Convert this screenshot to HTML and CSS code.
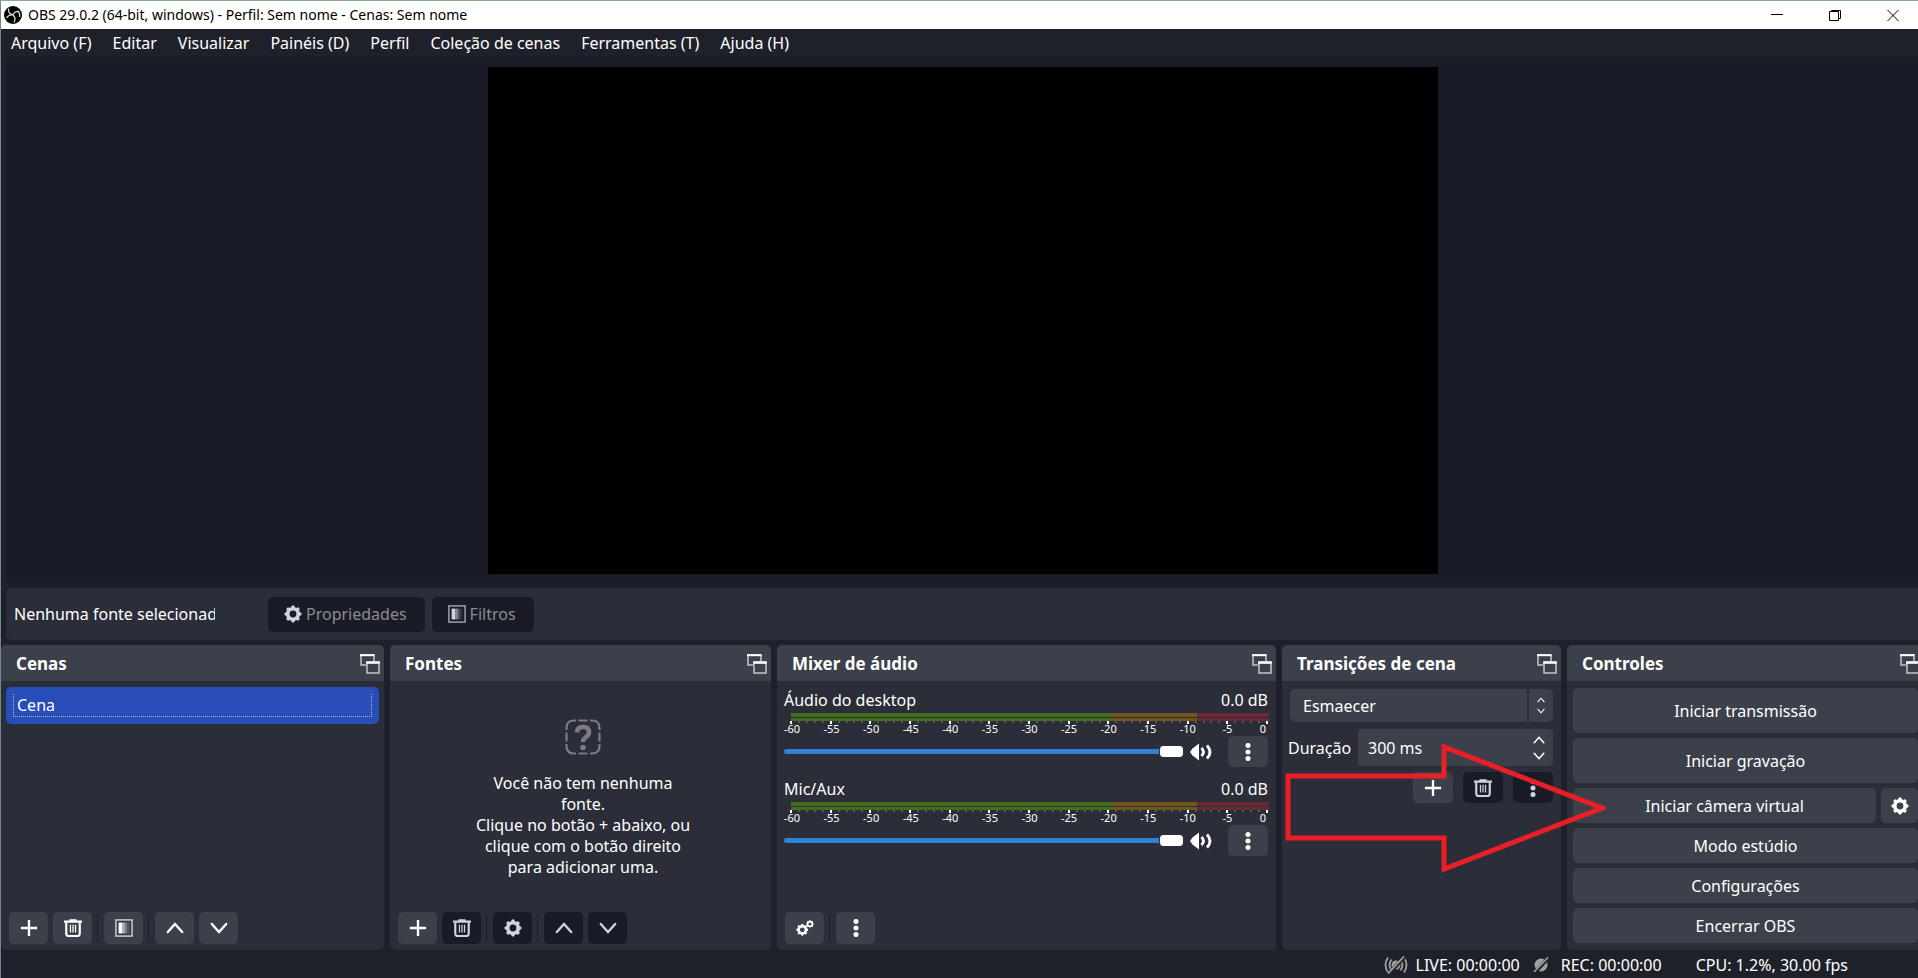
FILE: index.html
```html
<!DOCTYPE html>
<html lang="pt-BR">
<head>
    <meta charset="UTF-8">
    <meta name="viewport" content="width=device-width, initial-scale=1.0">
    <title>OBS 29.0.2</title>
    <link rel="stylesheet" href="styles.css">
</head>
<body>
    <!-- Shared icons -->
    <svg class="sprite" aria-hidden="true">
        <symbol id="plus" viewBox="0 0 20 20">
            <path d="M10 1v18M1 10h18" fill="none" stroke="currentColor" stroke-width="2.600"/>
        </symbol>
        <symbol id="trash" viewBox="0 0 20 20">
            <path d="M0 3h20M6 1.500h8" fill="none" stroke="currentColor" stroke-width="2.600"/>
            <path d="M2.500 4v12q0 3 3 3h9q3 0 3-3V4" fill="none" stroke="currentColor" stroke-width="2.400"/>
            <path d="M7.200 6.500v8.500M10 6.500v8.500M12.800 6.500v8.500" fill="none" stroke="currentColor" stroke-width="1.400"/>
        </symbol>
        <symbol id="gear" viewBox="0 0 20 20">
            <circle cx="10" cy="10" r="5.800" fill="none" stroke="currentColor" stroke-width="4"/>
            <path d="M10 3v-.6M10 17v.6M3 10h-.6M17 10h.6M14.950 5.050l.4-.4M5.050 14.950l-.4.4M5.050 5.050l-.4-.4M14.950 14.950l.4.4" fill="none" stroke="currentColor" stroke-width="4" stroke-linecap="round"/>
        </symbol>
        <symbol id="filter" viewBox="0 0 20 20">
            <rect x="1" y="1" width="18" height="18" fill="none" stroke="currentColor" stroke-opacity=".75" stroke-width="1.600"/>
            <path d="M4 4h4v12H4z" fill="currentColor"/>
            <path d="M8 4h3v12H8z" fill="currentColor" opacity=".6"/>
            <path d="M11 4h2.500v12H11z" fill="currentColor" opacity=".3"/>
            <path d="M13.500 4H16v12h-2.500z" fill="currentColor" opacity=".12"/>
        </symbol>
        <symbol id="up" viewBox="0 0 20 20">
            <path d="M2 14.500L10 5.500l8 9" fill="none" stroke="currentColor" stroke-width="2.600" stroke-linecap="round"/>
        </symbol>
        <symbol id="down" viewBox="0 0 20 20">
            <path d="M2 5.500l8 9 8-9" fill="none" stroke="currentColor" stroke-width="2.600" stroke-linecap="round"/>
        </symbol>
        <symbol id="dots" viewBox="0 0 20 20">
            <circle cx="10" cy="2.800" r="2.800" fill="currentColor"/>
            <circle cx="10" cy="10" r="2.800" fill="currentColor"/>
            <circle cx="10" cy="17.200" r="2.800" fill="currentColor"/>
        </symbol>
        <symbol id="float" viewBox="0 0 20 20">
            <path d="M6 11H1V1h13v6" fill="none" stroke="currentColor" stroke-opacity=".7" stroke-width="1.500"/>
            <path d="M0 1.200h14.500" stroke="currentColor" stroke-width="2"/>
            <path d="M7 8v11h12V8" fill="none" stroke="currentColor" stroke-opacity=".7" stroke-width="1.500"/>
            <path d="M6.200 8.500h13.600" stroke="currentColor" stroke-width="2.600"/>
        </symbol>
        <symbol id="speaker" viewBox="0 0 24 20">
            <path d="M1 10L3.500 6.500L10 1.500v17L3.500 13.500z" fill="currentColor"/>
            <path d="M12.500 6q4 4 0 8M18 3.500q6 6.500 0 13" fill="none" stroke="currentColor" stroke-width="2.800"/>
        </symbol>
    </svg>

    <div class="window">
        <header class="titlebar">
            <svg class="logo" viewBox="0 0 20 20">
                <circle cx="10" cy="10" r="9" fill="#000"/>
                <path d="M5.500 3.500q-.5 5.500 4.500 6.500 1.500-4 6-3.500M10 10q3.500 3 1 7.500M10 10Q6 9 3.500 13M15.500 6.500q2 2.500 1 5.500" fill="none" stroke="#d8d8d8" stroke-width="1.300"/>
            </svg>
            <span class="title">OBS 29.0.2 (64-bit, windows) - Perfil: Sem nome - Cenas: Sem nome</span>
            <div class="window-buttons">
                <button aria-label="Minimizar"><svg viewBox="0 0 13 13"><path d="M0 5.500h12"/></svg></button>
                <button aria-label="Restaurar"><svg viewBox="0 0 13 13"><path d="M.5 2.500h9v9h-9zM2.500 2.500v-1h9v8h-2"/></svg></button>
                <button aria-label="Fechar"><svg viewBox="0 0 13 13"><path d="M.5 1l11 11M11.500 1l-11 11"/></svg></button>
            </div>
        </header>

        <nav class="menu">
            <button>Arquivo (F)</button>
            <button>Editar</button>
            <button>Visualizar</button>
            <button>Painéis (D)</button>
            <button>Perfil</button>
            <button>Coleção de cenas</button>
            <button>Ferramentas (T)</button>
            <button>Ajuda (H)</button>
        </nav>

        <main class="preview">
            <div class="canvas"></div>
        </main>

        <section class="context-bar">
            <span class="source-name">Nenhuma fonte selecionada</span>
            <button class="btn off" disabled><svg class="icon"><use href="#gear"/></svg>Propriedades</button>
            <button class="btn off" disabled><svg class="icon"><use href="#filter"/></svg>Filtros</button>
        </section>

        <div class="docks">
            <section class="dock">
                <header class="dock-title"><h2>Cenas</h2><button aria-label="Destacar"><svg class="icon"><use href="#float"/></svg></button></header>
                <ul class="scenes">
                    <li><span>Cena</span></li>
                </ul>
                <div class="toolbar">
                    <button class="btn" aria-label="Adicionar"><svg class="icon"><use href="#plus"/></svg></button>
                    <button class="btn" aria-label="Remover"><svg class="icon"><use href="#trash"/></svg></button>
                    <i class="sep"></i>
                    <button class="btn" aria-label="Filtros"><svg class="icon"><use href="#filter"/></svg></button>
                    <i class="sep"></i>
                    <button class="btn" aria-label="Subir"><svg class="icon"><use href="#up"/></svg></button>
                    <button class="btn" aria-label="Descer"><svg class="icon"><use href="#down"/></svg></button>
                </div>
            </section>

            <section class="dock">
                <header class="dock-title"><h2>Fontes</h2><button aria-label="Destacar"><svg class="icon"><use href="#float"/></svg></button></header>
                <div class="empty">
                    <svg viewBox="0 0 36 36">
                        <path d="M1.500 11V9q0-7.500 7.500-7.500h2M13.500 1.500h9M25 1.500h2q7.500 0 7.500 7.500v2M34.500 13.500v9M34.500 25v2q0 7.500-7.500 7.500h-2M22.500 34.500h-9M11 34.500H9q-7.500 0-7.500-7.500v-2M1.500 22.500v-9"/>
                        <path class="mark" d="M12 13.500Q12 8 18 8t6 5q0 3-3 5t-3 5"/>
                        <circle cx="18" cy="28.500" r="2.800"/>
                    </svg>
                    <p>Você não tem nenhuma<br>fonte.<br>Clique no botão + abaixo, ou<br>clique com o botão direito<br>para adicionar uma.</p>
                </div>
                <div class="toolbar">
                    <button class="btn" aria-label="Adicionar"><svg class="icon"><use href="#plus"/></svg></button>
                    <button class="btn off" aria-label="Remover" disabled><svg class="icon"><use href="#trash"/></svg></button>
                    <i class="sep"></i>
                    <button class="btn off" aria-label="Propriedades" disabled><svg class="icon"><use href="#gear"/></svg></button>
                    <i class="sep"></i>
                    <button class="btn off" aria-label="Subir" disabled><svg class="icon"><use href="#up"/></svg></button>
                    <button class="btn off" aria-label="Descer" disabled><svg class="icon"><use href="#down"/></svg></button>
                </div>
            </section>

            <section class="dock">
                <header class="dock-title"><h2>Mixer de áudio</h2><button aria-label="Destacar"><svg class="icon"><use href="#float"/></svg></button></header>
                <div class="mixer">
                    <div class="channel">
                        <div class="channel-head"><label for="desktop">Áudio do desktop</label><span>0.0 dB</span></div>
                        <div class="meter"></div>
                        <div class="ticks"></div>
                        <div class="scale"><span>-60</span><span>-55</span><span>-50</span><span>-45</span><span>-40</span><span>-35</span><span>-30</span><span>-25</span><span>-20</span><span>-15</span><span>-10</span><span>-5</span><span>0</span></div>
                        <div class="volume">
                            <input type="range" id="desktop" min="0" max="100" value="100">
                            <button class="mute" aria-label="Mudo"><svg><use href="#speaker"/></svg></button>
                            <button class="btn wide" aria-label="Opções"><svg class="icon"><use href="#dots"/></svg></button>
                        </div>
                    </div>
                    <div class="channel">
                        <div class="channel-head"><label for="mic">Mic/Aux</label><span>0.0 dB</span></div>
                        <div class="meter"></div>
                        <div class="ticks"></div>
                        <div class="scale"><span>-60</span><span>-55</span><span>-50</span><span>-45</span><span>-40</span><span>-35</span><span>-30</span><span>-25</span><span>-20</span><span>-15</span><span>-10</span><span>-5</span><span>0</span></div>
                        <div class="volume">
                            <input type="range" id="mic" min="0" max="100" value="100">
                            <button class="mute" aria-label="Mudo"><svg><use href="#speaker"/></svg></button>
                            <button class="btn wide" aria-label="Opções"><svg class="icon"><use href="#dots"/></svg></button>
                        </div>
                    </div>
                </div>
                <div class="toolbar">
                    <button class="btn" aria-label="Propriedades avançadas">
                        <svg class="icon" viewBox="0 0 20 20"><use href="#gear" x="0" y="5" width="14" height="14"/><use href="#gear" x="11" y="1" width="9" height="9"/></svg>
                    </button>
                    <i class="sep"></i>
                    <button class="btn" aria-label="Menu do mixer"><svg class="icon"><use href="#dots"/></svg></button>
                </div>
            </section>

            <section class="dock">
                <header class="dock-title"><h2>Transições de cena</h2><button aria-label="Destacar"><svg class="icon"><use href="#float"/></svg></button></header>
                <div class="transitions">
                    <div class="combo">
                        <select aria-label="Transição"><option>Esmaecer</option></select>
                        <span class="combo-arrows"><svg><use href="#up"/></svg><svg><use href="#down"/></svg></span>
                    </div>
                    <div class="duration">
                        <label for="duration">Duração</label>
                        <div class="spin">
                            <input type="text" id="duration" value="300 ms">
                            <div class="spin-buttons">
                                <button aria-label="Aumentar"><svg><use href="#up"/></svg></button>
                                <button aria-label="Diminuir"><svg><use href="#down"/></svg></button>
                            </div>
                        </div>
                    </div>
                    <div class="transition-buttons">
                        <button class="btn wide" aria-label="Adicionar"><svg class="icon"><use href="#plus"/></svg></button>
                        <button class="btn wide off" aria-label="Remover" disabled><svg class="icon"><use href="#trash"/></svg></button>
                        <button class="btn wide off" aria-label="Opções" disabled><svg class="icon"><use href="#dots"/></svg></button>
                    </div>
                </div>
                <!-- Red arrow drawn over the docks -->
                <svg class="arrow" viewBox="0 0 324 130"><path d="M6 33H162V4L320 65 162 126V95H6z"/></svg>
            </section>

            <section class="dock">
                <header class="dock-title"><h2>Controles</h2><button aria-label="Destacar"><svg class="icon"><use href="#float"/></svg></button></header>
                <div class="controls">
                    <button class="btn tall">Iniciar transmissão</button>
                    <button class="btn tall">Iniciar gravação</button>
                    <div class="row">
                        <button class="btn">Iniciar câmera virtual</button>
                        <button class="btn config" aria-label="Configurar câmera"><svg class="icon"><use href="#gear"/></svg></button>
                    </div>
                    <button class="btn">Modo estúdio</button>
                    <button class="btn">Configurações</button>
                    <button class="btn">Encerrar OBS</button>
                </div>
            </section>
        </div>

        <footer class="status">
            <span class="live">
                <svg viewBox="0 0 24 18"><circle cx="12" cy="9" r="4.500" fill="currentColor"/><path d="M4 1.500q-5 7.500 0 15M7.500 3.500q-4 5.500 0 11M20 1.500q5 7.500 0 15M16.500 3.500q4 5.500 0 11" fill="none" stroke="currentColor" stroke-width="1.800"/><path d="M4.500 18L20.500 1" stroke="#1f212a" stroke-width="4"/><path d="M4 17.500L20 .5" stroke="currentColor" stroke-width="1.800"/></svg>
                LIVE: 00:00:00
            </span>
            <span class="rec">
                <svg viewBox="0 0 16 18"><circle cx="8" cy="9" r="6.500" fill="currentColor"/><path d="M1.500 17L15.500 2" stroke="#1f212a" stroke-width="3.500"/><path d="M1 16L15 1.500" stroke="currentColor" stroke-width="1.600"/></svg>
                REC: 00:00:00
            </span>
            <span class="cpu">CPU: 1.2%, 30.00 fps</span>
        </footer>
    </div>
</body>
</html>
```
FILE: styles.css
```css
* {
    box-sizing: border-box;
}

body {
    margin: 0;
    background-color: #1f212a;
    color: #fff;
    font-family: "Noto Sans", "Open Sans", sans-serif;
    font-size: 16px;
    line-height: 20px;
}

button,
input,
select {
    font: inherit;
    color: inherit;
    border: none;
    background: none;
    padding: 0;
    margin: 0;
}

svg {
    display: block;
    flex: none;
}

.sprite {
    position: absolute;
    width: 0;
    height: 0;
}

.icon {
    width: 18px;
    height: 18px;
}

.window {
    display: flex;
    flex-direction: column;
    min-height: 100vh;
    overflow: hidden;
    border-top: 1px solid #86ad87;
    border-left: 1px solid #6c8a90;
}

/* Title bar */
.titlebar {
    display: flex;
    align-items: center;
    height: 28px;
    padding-left: 2px;
    background-color: #fff;
    color: #000;
    font-size: 14px;
}

.logo {
    width: 20px;
    height: 20px;
}

.title {
    margin-left: 5px;
}

.window-buttons {
    display: flex;
    margin-left: auto;
    margin-right: -4px;
}

.window-buttons button {
    display: flex;
    align-items: center;
    justify-content: center;
    width: 58px;
    height: 28px;
}

.window-buttons svg {
    width: 13px;
    height: 13px;
    fill: none;
    stroke: #000;
}

/* Menu */
.menu {
    display: flex;
    gap: 21px;
    height: 28px;
    padding-left: 10px;
}

/* Preview */
.preview {
    flex: 1;
    display: flex;
    justify-content: center;
    align-items: flex-start;
    margin: 0 -2px 0 5px;
    padding: 10px 0 9px;
    background-color: #191b26;
}

.canvas {
    width: 49.6%;
    aspect-ratio: 950 / 507;
    background-color: #000;
}

/* Source bar */
.context-bar {
    display: flex;
    align-items: center;
    gap: 7px;
    height: 52px;
    margin: 5px -6px 5px 5px;
    padding-left: 8px;
    border-radius: 5px;
    background-color: #2b2d38;
}

.source-name {
    width: 201px;
    margin-right: 46px;
    overflow: hidden;
    white-space: nowrap;
}

.context-bar .btn {
    gap: 4px;
    height: 35px;
    padding: 0 18px 0 16px;
}

.btn {
    display: flex;
    align-items: center;
    justify-content: center;
    border-radius: 5px;
    background-color: #3c404b;
}

.btn.off {
    background-color: #191b26;
    color: #8c8c8f;
}

.btn.off .icon {
    color: #d2d3e0;
}

/* Docks */
.docks {
    display: grid;
    grid-template-columns: 383fr 381fr 499fr 279fr 357fr;
    gap: 6px;
    margin-right: -6px;
}

.dock {
    position: relative;
    display: flex;
    flex-direction: column;
    border-radius: 5px;
    background-color: #2b2d38;
}

.dock-title {
    display: flex;
    align-items: center;
    justify-content: space-between;
    height: 36px;
    padding: 1px 4px 0 15px;
    border-radius: 5px 5px 0 0;
    background-color: #3c404b;
}

.dock-title .icon {
    width: 20px;
    height: 20px;
}

h2 {
    margin: 0;
    font-size: 17px;
    font-weight: bold;
}

.scenes {
    flex: 1;
    margin: 0;
    padding: 6px 5px;
    list-style: none;
}

.scenes li {
    padding: 7px;
    border-radius: 5px;
    background-color: #284cb8;
}

.scenes span {
    display: block;
    padding: 1px 3px;
    border: 1px dotted #b9bfb0;
    border-top: none;
}

.toolbar {
    display: flex;
    gap: 5px;
    margin-top: auto;
    padding: 0 8px 6px;
}

.toolbar .btn {
    width: 39px;
    height: 32px;
}

.sep {
    width: 1px;
    margin: 3px 1px 3px 0;
    background-color: #191b26;
}

/* Sources */
.empty {
    display: flex;
    flex-direction: column;
    align-items: center;
    padding: 38px 0 0 5px;
}

.empty svg {
    width: 36px;
    height: 36px;
    fill: none;
    stroke: #7b7c83;
    stroke-width: 2.2;
}

.empty .mark {
    stroke-width: 4.5;
}

.empty circle {
    fill: #7b7c83;
    stroke: none;
}

.empty p {
    margin: 18px 0 0;
    line-height: 21px;
    text-align: center;
}

/* Mixer */
.mixer {
    padding: 9px 8px 0 7px;
}

.channel {
    margin-bottom: 12px;
}

.channel-head {
    display: flex;
    justify-content: space-between;
}

.meter {
    height: 8px;
    margin: 3px -1px 0 7px;
    background: linear-gradient(#2b2d38, #2b2d38) 0 4px / 100% 1px no-repeat,
        linear-gradient(90deg, #436e1f 67%, #70571f 67% 85%, #6a2935 85%);
}

.ticks {
    height: 3px;
    margin: 0 0 0 6px;
    background: repeating-linear-gradient(90deg, #fff 0 2px, transparent 2px calc((100% - 2px) / 12)),
        repeating-linear-gradient(90deg, #55565d 0 2px, transparent 2px calc((100% - 2px) / 60)) 0 0 / 100% 2px no-repeat;
}

.scale {
    display: flex;
    justify-content: space-between;
    height: 12px;
    margin: 0 -3px 0 -4px;
    font-size: 11px;
    line-height: 10px;
}

.scale span {
    width: 24px;
    text-align: center;
}

.scale span:last-child {
    width: 16px;
}

.volume {
    display: flex;
    align-items: center;
}

.volume input {
    flex: 1;
    min-width: 0;
    height: 12px;
    appearance: none;
}

.volume input::-webkit-slider-runnable-track {
    height: 5px;
    border-radius: 3px;
    background-color: #2f81d4;
}

.volume input::-webkit-slider-thumb {
    appearance: none;
    width: 25px;
    height: 11px;
    margin-top: -3px;
    border: 1px solid #2b2d38;
    border-width: 0 1px;
    border-radius: 4px;
    background-color: #fff;
}

.mute {
    margin: 0 15px 0 5px;
}

.mute svg {
    width: 24px;
    height: 20px;
}

.btn.wide {
    width: 40px;
    height: 31px;
}

/* Transitions */
.transitions {
    padding: 8px 8px 0 6px;
}

.combo {
    position: relative;
    margin-left: 2px;
}

.combo select {
    display: block;
    width: 100%;
    height: 33px;
    padding-left: 13px;
    border-radius: 5px;
    background-color: #3c404b;
    appearance: none;
}

.combo-arrows {
    position: absolute;
    top: 0;
    right: 0;
    display: flex;
    flex-direction: column;
    align-items: center;
    justify-content: center;
    gap: 3px;
    width: 26px;
    height: 33px;
    border-left: 2px solid #2b2d38;
    pointer-events: none;
}

.combo-arrows svg {
    width: 8px;
    height: 8px;
}

.duration {
    display: flex;
    align-items: center;
    justify-content: space-between;
    margin-top: 7px;
}

.spin {
    display: flex;
    align-items: center;
    width: 195px;
    height: 37px;
    border-radius: 4px;
    background-color: #3c404b;
}

.spin input {
    flex: 1;
    min-width: 0;
    padding-left: 10px;
}

.spin-buttons {
    display: flex;
    flex-direction: column;
    gap: 4px;
    padding-right: 8px;
}

.spin-buttons svg {
    width: 12px;
    height: 12px;
}

.transition-buttons {
    display: flex;
    justify-content: flex-end;
    gap: 10px;
    margin-top: 6px;
}

.arrow {
    position: absolute;
    z-index: 1;
    top: 98px;
    left: 0;
    width: 324px;
    height: 130px;
    fill: none;
    stroke: #e91f27;
    stroke-width: 5;
    pointer-events: none;
}

/* Controls */
.controls {
    display: flex;
    flex-direction: column;
    gap: 5px;
    padding: 7px 6px;
}

.controls .btn {
    height: 35px;
}

.controls .tall {
    height: 45px;
}

.row {
    display: flex;
    gap: 5px;
}

.row .btn {
    flex: 1;
}

.row .config {
    flex: none;
    width: 37px;
}

/* Status bar */
.status {
    display: flex;
    align-items: center;
    justify-content: flex-end;
    height: 28px;
    padding: 2px 70px 0 0;
}

.status span {
    display: flex;
    align-items: center;
}

.status svg {
    height: 18px;
    color: #a0a0a0;
}

.live svg {
    width: 24px;
    margin-right: 8px;
}

.rec {
    margin: 0 34px 0 13px;
}

.rec svg {
    width: 16px;
    margin-right: 12px;
}
```
